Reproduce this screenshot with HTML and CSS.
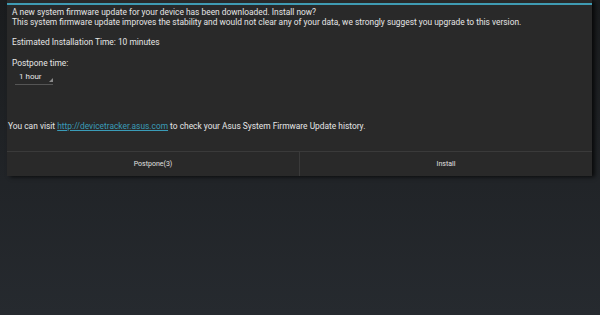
FILE: index.html
```html
<!DOCTYPE html>
<html lang="en">
<head>
  <meta charset="UTF-8" />
  <title>System Update</title>
  <link rel="stylesheet" href="styles.css">
</head>
<body>
  <div class="dialog">
    <div class="title-line"></div>
    <div class="content">
      <p class="msg">A new system firmware update for your device has been downloaded. Install now?<br>
      This system firmware update improves the stability and would not clear any of your data, we strongly suggest you upgrade to this version.</p>
      <p class="msg est">Estimated Installation Time: 10 minutes</p>
      <p class="msg label">Postpone time:</p>
      <div class="spinner">1 hour</div>
    </div>
    <p class="visit">You can visit <a href="#">http://devicetracker.asus.com</a> to check your Asus System Firmware Update history.</p>
    <div class="buttons">
      <button class="btn">Postpone(3)</button>
      <button class="btn">Install</button>
    </div>
  </div>
</body>
</html>
```

FILE: styles.css
```css
html, body {
  height: 100%;
}
body {
  margin: 0;
  font-family: Roboto, "Noto Sans", sans-serif;
  background: linear-gradient(#1a1c1e, #262a2f);
  color: #e6e6e6;
}

.dialog {   /* dark holo dialog */
  margin: 0 8px 0 7px;
  background: #292929;
  padding-top: 3px;
  box-shadow: 3px 1px 4px rgba(0,0,0,0.7);
}
.title-line {
  height: 2px;
  background: #3f9bb3;
}

.content {
  padding: 2px 5px 0;
}
.msg {
  margin: 0;
  font-size: 8.4px;
  line-height: 10px;
}
.est {
  margin-top: 10px;
}
.label {
  margin-top: 11px;
}

/* spinner with holo underline + corner triangle */
.spinner {
  position: relative;
  width: 34px;
  margin: 4px 0 0 3px;
  padding: 0 0 2px 4px;
  font-size: 8px;
  line-height: 10px;
  border-bottom: 1px solid #555;
}
.spinner::after {
  content: "";
  position: absolute;
  right: 0;
  bottom: 2px;
  border-left: 4px solid transparent;
  border-bottom: 4px solid #8a8a8a;
}

.visit {
  margin: 36px 0 0 1px;
  font-size: 8.4px;
  line-height: 10px;
}
.visit a {
  color: #3a9cb8;
}

.buttons {
  display: flex;
  margin-top: 20px;
  border-top: 1px solid #3a3a3a;
}
.btn {
  flex: 1;
  height: 24px;
  padding-top: 1px;
  background: none;
  border: 0;
  color: #e0e0e0;
  font-family: inherit;
  font-size: 7px;
}
.btn + .btn {
  border-left: 1px solid #3a3a3a;
}
```
